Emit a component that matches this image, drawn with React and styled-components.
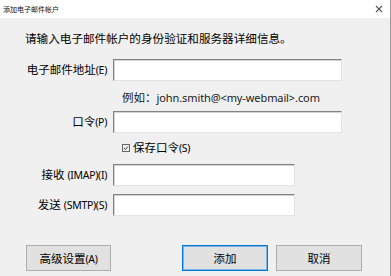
import React from 'react';
import styled, { createGlobalStyle } from 'styled-components';

const GlobalStyle = createGlobalStyle`
  html, body {
    margin: 0;
    padding: 0;
    background: #f0f0f0;
  }
  * {
    box-sizing: border-box;
  }
`;

const FONT = `"Noto Sans", "Noto Sans CJK SC", sans-serif`;

const Window = styled.div`
  width: 391px;
  height: 276px;
  background: #f0f0f0;
  border-right: 1px solid #9a9a9a;
  font-family: ${FONT};
  color: #000;
  display: flex;
  flex-direction: column;
  overflow: hidden;
`;

const TitleBar = styled.div`
  height: 18px;
  background: #fff;
  display: flex;
  align-items: center;
  justify-content: space-between;
  padding: 0 6px 0 3px;
`;

const Title = styled.span`
  font-size: 7px;
  line-height: 1;
  color: #111;
`;

const CloseIcon = styled.svg`
  width: 8px;
  height: 8px;
  margin-right: 1px;
`;

const Body = styled.div`
  flex: 1;
  padding: 13px 0 0 25px;
  display: flex;
  flex-direction: column;
`;

const Heading = styled.div`
  font-size: 11.6px;
  line-height: 16px;
  height: 16px;
`;

const Row = styled.div`
  display: grid;
  grid-template-columns: 82px auto;
  column-gap: 6px;
  align-items: center;
  margin-top: ${(p) => p.$top}px;
  height: ${(p) => p.$h || 22}px;
`;

const Label = styled.label`
  text-align: right;
  font-size: 11.5px;
  line-height: 16px;
  white-space: nowrap;
`;

const Latin = styled.span`
  font-size: 10.5px;
  letter-spacing: -0.3px;
`;

const Input = styled.input`
  width: ${(p) => p.$w}px;
  height: 22px;
  margin: 0;
  padding: 0 3px;
  background: #fff;
  border-style: solid;
  border-width: 1px;
  border-color: #828282 #e3e3e3 #e3e3e3 #828282;
  box-shadow: inset 1px 1px 0 #d4d4d4;
  outline: none;
  font-family: ${FONT};
  font-size: 12px;
`;

const Hint = styled.div`
  grid-column: 2;
  padding-left: 9px;
  font-size: 11.5px;
  line-height: 16px;
  color: #1a1a1a;
  white-space: nowrap;
`;

const HintLatin = styled.span`
  font-size: 11px;
  letter-spacing: -0.1px;
`;

const Check = styled.label`
  grid-column: 2;
  padding-left: 9px;
  display: flex;
  align-items: center;
  gap: 3px;
  font-size: 11.5px;
  line-height: 16px;
  white-space: nowrap;
`;

const CheckBox = styled.svg`
  width: 8px;
  height: 8px;
`;

const ButtonRow = styled.div`
  margin-top: 29px;
  margin-left: 1px;
  padding-right: 28px;
  display: flex;
  align-items: center;
  gap: 8px;
`;

const Spacer = styled.div`
  flex: 1;
`;

const Button = styled.button`
  width: ${(p) => p.$w || 86}px;
  height: 26px;
  margin: 0;
  padding: 0;
  background: #e1e1e1;
  border: 1px solid ${(p) => (p.$primary ? '#0078d7' : '#adadad')};
  box-shadow: ${(p) => (p.$primary ? 'inset 0 0 0 1px #7db7e8' : 'none')};
  font-family: ${FONT};
  font-size: 11.5px;
  color: #000;
`;

export default function App() {
  return (
    <>
      <GlobalStyle />
      <Window>
        <TitleBar>
          <Title>添加电子邮件帐户</Title>
          <CloseIcon viewBox="0 0 8 8">
            <path d="M1 1 L7 7 M7 1 L1 7" stroke="#555" strokeWidth="1.1" />
          </CloseIcon>
        </TitleBar>
        <Body>
          <Heading>请输入电子邮件帐户的身份验证和服务器详细信息。</Heading>

          <Row $top={12}>
            <Label>
              电子邮件地址<Latin>(E)</Latin>
            </Label>
            <Input $w={229} />
          </Row>

          <Row $top={9} $h={16}>
            <Hint>
              例如：<HintLatin>john.smith@&lt;my-webmail&gt;.com</HintLatin>
            </Hint>
          </Row>

          <Row $top={5}>
            <Label>
              口令<Latin>(P)</Latin>
            </Label>
            <Input $w={229} type="password" />
          </Row>

          <Row $top={7} $h={16}>
            <Check>
              <CheckBox viewBox="0 0 8 8">
                <rect x="0.5" y="0.5" width="7" height="7" fill="none" stroke="#666" />
                <path d="M2 4 L3.4 5.5 L6 2.5" fill="none" stroke="#444" strokeWidth="1" />
              </CheckBox>
              <span>
                保存口令<Latin>(S)</Latin>
              </span>
            </Check>
          </Row>

          <Row $top={8}>
            <Label>
              接收 <Latin>(IMAP)(I)</Latin>
            </Label>
            <Input $w={182} />
          </Row>

          <Row $top={8}>
            <Label>
              发送 <Latin>(SMTP)(S)</Latin>
            </Label>
            <Input $w={182} />
          </Row>

          <ButtonRow>
            <Button $w={85}>
              高级设置<Latin>(A)</Latin>
            </Button>
            <Spacer />
            <Button $w={86} $primary>
              添加
            </Button>
            <Button $w={86}>取消</Button>
          </ButtonRow>
        </Body>
      </Window>
    </>
  );
}
